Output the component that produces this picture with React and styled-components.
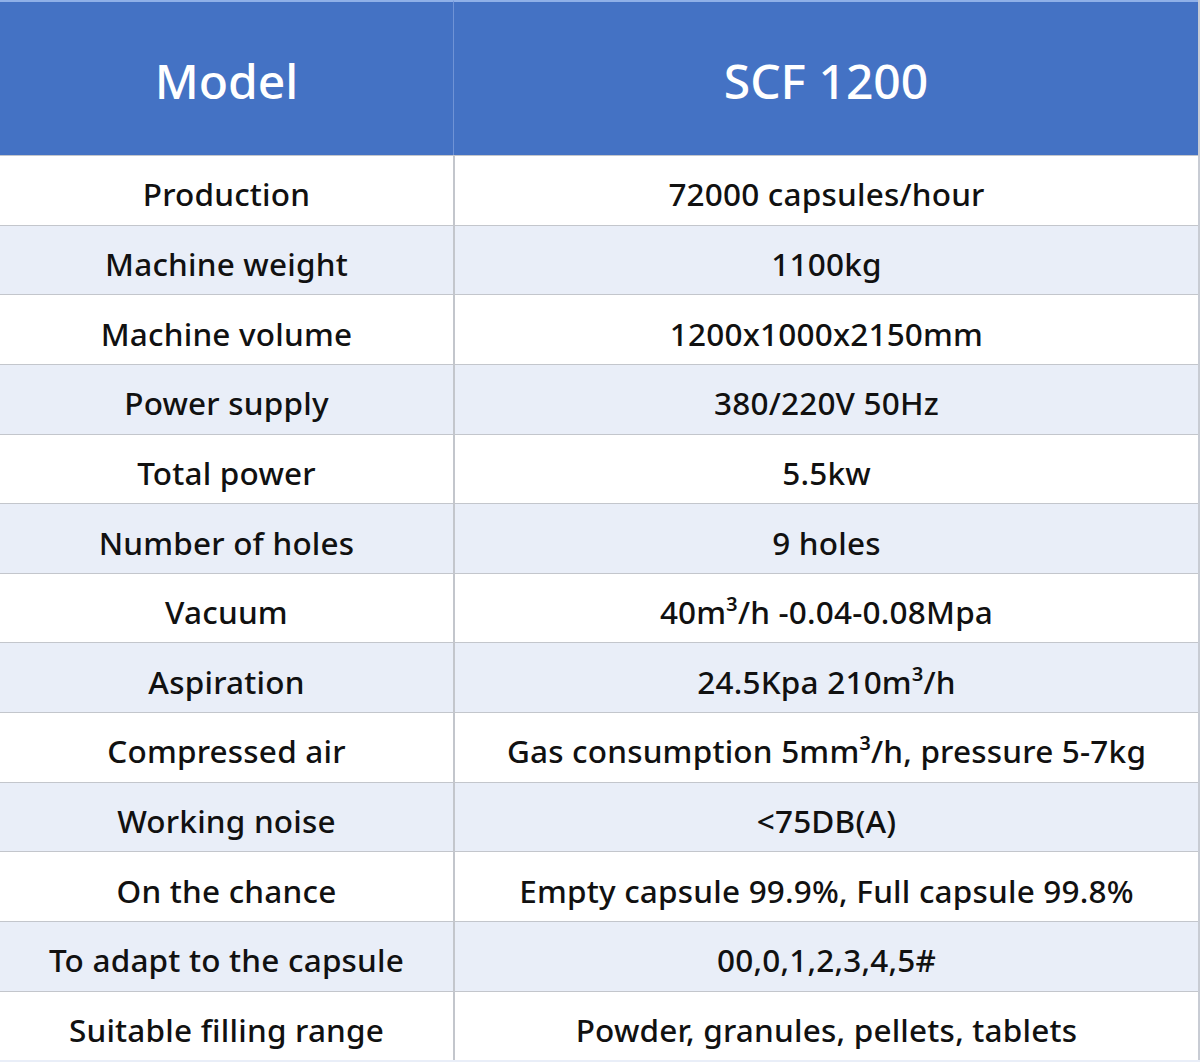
import React from 'react'
import styled, { createGlobalStyle } from 'styled-components'

const GlobalStyle = createGlobalStyle`
  html, body {
    margin: 0;
    padding: 0;
    background: #e9eef8;
  }
  body {
    font-family: "Noto Sans", "Open Sans", sans-serif;
  }
`;

const Table = styled.div`
  width: 1198px;
  display: grid;
  grid-template-columns: 453px 1fr;
  grid-template-rows: 155px repeat(13, 69.65px);
  border-right: 2px solid #c8ccd4;
  background: #fff;
`;

const HeadCell = styled.div`
  background: #4472c4;
  color: #fff;
  display: flex;
  align-items: center;
  justify-content: center;
  font-size: 48px;
  font-weight: 500;
  padding-top: 4px;
  border-top: 2px solid #8fb0e8;
  border-left: ${p => (p.first ? 'none' : '1px solid #6f93d6')};
  box-sizing: border-box;
`;

const Cell = styled.div`
  background: ${p => (p.shaded ? '#e9eef8' : '#ffffff')};
  color: #111;
  display: flex;
  align-items: center;
  justify-content: center;
  font-size: 31.5px;
  font-weight: 500;
  letter-spacing: 0.2px;
  padding-top: 7px;
  border-top: 1px solid #c3c6cc;
  border-left: ${p => (p.first ? 'none' : '2px solid #c3c6cc')};
  box-sizing: border-box;
  white-space: nowrap;
`;

const rows = [
  ['Production', '72000 capsules/hour'],
  ['Machine weight', '1100kg'],
  ['Machine volume', '1200x1000x2150mm'],
  ['Power supply', '380/220V 50Hz'],
  ['Total power', '5.5kw'],
  ['Number of holes', '9 holes'],
  ['Vacuum', '40m³/h -0.04-0.08Mpa'],
  ['Aspiration', '24.5Kpa 210m³/h'],
  ['Compressed air', 'Gas consumption 5mm³/h, pressure 5-7kg'],
  ['Working noise', '<75DB(A)'],
  ['On the chance', 'Empty capsule 99.9%, Full capsule 99.8%'],
  ['To adapt to the capsule', '00,0,1,2,3,4,5#'],
  ['Suitable filling range', 'Powder, granules, pellets, tablets'],
]

export default function App() {
  return (
    <>
      <GlobalStyle />
      <Table>
        <HeadCell first>Model</HeadCell>
        <HeadCell>SCF 1200</HeadCell>
        {rows.map(([label, value], i) => (
          <React.Fragment key={label}>
            <Cell first shaded={i % 2 === 1}>{label}</Cell>
            <Cell shaded={i % 2 === 1}>{value}</Cell>
          </React.Fragment>
        ))}
      </Table>
    </>
  )
}
